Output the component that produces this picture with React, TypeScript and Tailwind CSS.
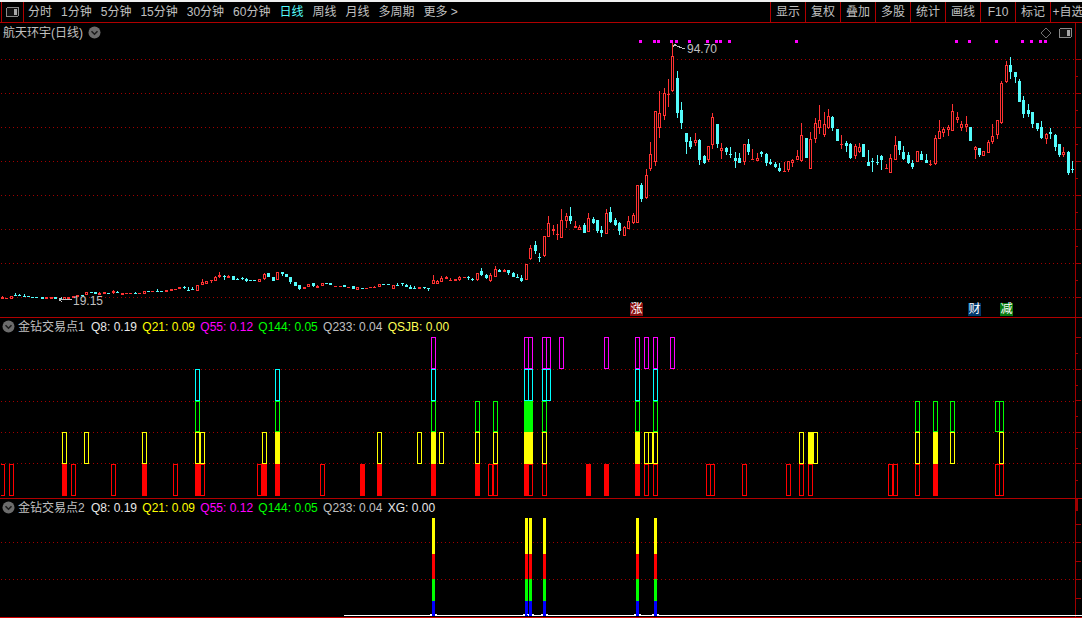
type Row = [number, number, number, "r" | "c", number?, number?];

// candle rows are read off zoomed crops: [x, bodyTop, bodyBottom, colour, wickTop, wickBottom]
const scan = (ox: number, oy: number, sx: number, rows: Row[]) =>
  rows.map(([z, t, b, k, wt, wb]) => ({
    x: Math.floor(ox + z / sx),
    top: Math.round(oy + t / 3),
    bottom: Math.round(oy + b / 3),
    wickTop: Math.round(oy + (wt ?? t) / 3),
    wickBottom: Math.round(oy + (wb ?? b) / 3),
    up: k === "r",
  }));

const candles = [
  ...scan(0, 268, 3, [
    [6, 88, 93, "r", 84], [18, 91, 93, "r"], [33, 85, 92, "r"], [45, 82, 84, "c", 75], [57, 81, 84, "c", 78],
    [72, 84, 85, "c", 78, 87], [84, 84, 86, "c"], [96, 87, 88, "c"], [110, 88, 89, "c", 88, 91], [126, 88, 92, "c"],
    [140, 88, 92, "r"], [154, 88, 92, "r"], [166, 88, 93, "c"], [180, 91, 93, "c"], [193, 88, 95, "r"],
    [205, 88, 92, "r"], [220, 85, 90, "r"], [232, 81, 86, "r"], [246, 81, 83, "c"], [259, 73, 80, "r"],
    [274, 73, 75, "c"], [286, 73, 78, "c", 71], [298, 75, 80, "r", 72], [313, 73, 77, "r"], [325, 75, 77, "c"],
    [340, 70, 76, "r", 66, 78], [352, 72, 75, "c", 69], [367, 76, 80, "r"], [378, 76, 78, "r"], [391, 76, 78, "r"],
    [405, 74, 77, "c", 72], [418, 76, 78, "r"], [433, 70, 77, "r"], [445, 70, 72, "c"], [458, 70, 72, "r"],
    [471, 69, 70, "c", 64], [484, 68, 71, "c"], [499, 67, 71, "r"], [514, 64, 68, "r"], [526, 62, 66, "r"],
    [538, 58, 62, "r"], [552, 58, 60, "c", 54, 63], [564, 65, 66, "c", 58], [577, 64, 66, "c", 58], [592, 52, 68, "r"],
    [607, 42, 51, "r", 34, 52], [619, 39, 47, "r"], [634, 37, 40, "r", 37, 45], [646, 28, 38, "r", 24], [658, 22, 28, "r", 13, 31],
    [673, 23, 27, "c", 20, 36], [685, 24, 29, "r", 21], [700, 24, 35, "c"], [712, 33, 34, "c", 30], [727, 29, 31, "c", 27, 36],
    [739, 32, 38, "c", 29, 42], [751, 37, 39, "c"], [763, 37, 40, "c"], [778, 34, 41, "r"], [793, 18, 33, "r", 15, 36],
    [805, 16, 28, "c"], [820, 27, 38, "c"], [832, 13, 37, "r"], [847, 13, 18, "c", 13, 24], [859, 19, 28, "c"],
    [871, 27, 41, "c", 27, 47], [886, 43, 54, "c"], [898, 51, 63, "c", 51, 65], [913, 57, 62, "r"], [925, 48, 56, "r"],
    [940, 46, 53, "c", 46, 57], [952, 54, 59, "r", 51], [967, 46, 55, "r"], [979, 46, 49, "c"], [990, 46, 50, "c"],
  ]),
  ...scan(0, 260, 2.904, [
    [975, 78, 82, "r"], [988, 78, 82, "r"],
    [1000, 74, 82, "c"], [1013, 80, 84, "r"], [1026, 78, 88, "c"], [1039, 82, 90, "r"], [1052, 83, 85, "c"],
    [1065, 84, 85, "r"], [1075, 82, 84, "r"], [1088, 81, 84, "r", 78], [1102, 72, 82, "r"], [1115, 72, 75, "c"],
    [1128, 73, 75, "c"], [1142, 76, 87, "r"], [1154, 74, 77, "c", 70],
  ]),
  ...scan(400, 190, 3, [
    [7, 280, 282, "c", 280, 288], [19, 285, 290, "c", 282], [31, 291, 297, "c", 285], [43, 295, 297, "c", 288], [58, 291, 297, "r"],
    [73, 292, 294, "c", 292, 297], [85, 294, 296, "c", 294, 303], [100, 270, 282, "r", 255], [112, 273, 282, "r", 270], [124, 264, 276, "r", 258],
    [139, 261, 267, "r", 258, 268], [150, 270, 273, "r", 265], [165, 268, 273, "r"], [178, 261, 270, "r", 258, 273], [192, 262, 264, "r"],
    [205, 261, 264, "c", 258, 270], [218, 267, 270, "c", 264, 273], [232, 250, 270, "r", 250, 273], [244, 243, 255, "c", 234, 258], [259, 256, 264, "c", 252, 267],
    [271, 255, 273, "r", 249, 276], [286, 238, 261, "r", 228], [297, 241, 246, "c", 237], [313, 240, 246, "r", 237], [325, 240, 249, "c", 240, 255],
    [340, 249, 261, "c", 246], [352, 261, 264, "c", 252], [364, 264, 273, "c", 255, 276], [379, 222, 270, "r"], [391, 175, 207, "r", 165, 210],
    [406, 165, 183, "c", 153, 192], [418, 201, 204, "c", 189, 216], [433, 138, 198, "r", 138, 201], [445, 99, 141, "r", 78], [460, 118, 123, "r", 105, 135],
    [472, 132, 134, "r", 102, 150], [484, 90, 144, "r", 57], [499, 78, 93, "r", 69, 114], [511, 78, 93, "c", 51, 102], [526, 108, 114, "r", 93],
    [538, 111, 120, "r", 105], [553, 105, 129, "c", 99], [565, 84, 126, "r", 69], [580, 87, 99, "c", 81, 102], [592, 90, 123, "c", 90, 129],
    [604, 120, 129, "c", 108, 141], [619, 69, 132, "r", 57], [631, 66, 96, "c", 51, 99], [646, 90, 105, "c", 84, 108], [658, 99, 123, "c", 96, 135],
    [673, 111, 138, "r", 108], [685, 93, 117, "r", 78], [700, 75, 99, "r", 69, 102],
  ]),
  ...scan(520, 40, 3, [
    [352, 436, 548, "r"], [364, 435, 477, "c", 429, 486], [379, 406, 474, "r", 388, 477], [391, 343, 387, "r", 306, 393], [406, 214, 365, "r", 214, 378],
    [418, 220, 263, "r", 153, 294], [433, 160, 227, "r", 144, 240], [445, 162, 165, "r", 117, 201], [457, 48, 153, "r", 10, 156], [472, 114, 219, "c", 93, 234],
    [484, 210, 249, "c", 186, 267], [499, 279, 306, "c", 279, 342], [511, 303, 321, "c", 291, 327], [526, 300, 309, "r", 279, 318], [538, 300, 360, "c", 297, 375],
    [553, 348, 370, "c", 345, 372], [565, 319, 360, "r", 319, 366], [577, 232, 314, "r", 219, 327], [592, 252, 312, "c", 252, 324], [604, 324, 333, "r", 309, 357],
    [619, 324, 336, "c", 321, 345], [631, 342, 345, "c", 321, 354], [646, 354, 363, "c", 336, 384], [658, 354, 369, "c", 339], [673, 313, 366, "r", 313, 375],
    [685, 312, 336, "c", 297, 345], [697, 356, 358, "r", 327, 360], [712, 354, 362, "r", 339], [724, 336, 342, "c", 333, 351], [739, 342, 369, "c", 339, 378],
    [751, 366, 372, "c", 358, 375], [766, 372, 381, "c", 366, 384], [778, 384, 393, "c", 369, 396], [793, 392, 395, "r", 366, 396], [805, 364, 390, "r", 364, 396],
    [817, 360, 369, "r", 357, 381], [832, 348, 360, "r", 331],
  ]),
  ...scan(800, 40, 3, [
    [4, 286, 362, "r", 249, 365], [19, 294, 354, "c"], [31, 298, 386, "r", 276], [46, 250, 296, "r", 234, 309], [58, 240, 263, "r", 195, 282],
    [73, 253, 285, "r", 216, 291], [85, 229, 263, "r", 207, 267], [97, 231, 264, "c", 228, 273], [112, 267, 303, "c"], [124, 311, 314, "r", 285, 327],
    [139, 309, 318, "c", 303, 336], [151, 312, 354, "c", 309, 357], [166, 318, 347, "r", 312, 357], [178, 321, 336, "r", 309, 339], [190, 312, 351, "c"],
    [205, 366, 378, "c", 330], [217, 363, 366, "c", 354, 396], [232, 366, 369, "c", 345, 375], [244, 348, 360, "c", 345, 390], [259, 384, 387, "r", 372],
    [271, 354, 398, "r", 342], [286, 316, 360, "r", 288], [298, 303, 330, "c", 303, 345], [310, 336, 357, "c", 318, 360], [325, 345, 369, "c", 336, 372],
    [337, 369, 381, "c", 360, 387], [352, 334, 365, "r"], [364, 342, 360, "c", 333], [379, 360, 369, "c", 342], [391, 372, 375, "r", 360, 378],
    [406, 294, 372, "r", 285, 375], [418, 274, 296, "r", 240], [430, 267, 279, "r", 261, 291], [445, 261, 270, "r", 255, 288], [457, 213, 272, "r", 192],
    [472, 232, 240, "r", 216, 249], [484, 252, 264, "r", 243, 273], [499, 252, 262, "r", 228, 276], [511, 261, 303, "c"], [526, 321, 329, "r", 318, 357],
    [538, 324, 346, "c", 324, 351], [550, 334, 347, "r"], [565, 306, 338, "r", 300], [577, 288, 305, "r", 252, 312], [592, 240, 285, "r", 240, 297],
    [604, 129, 249, "r", 123, 252], [619, 75, 126, "r", 63, 129], [631, 75, 96, "c", 51, 117], [646, 96, 111, "c", 96, 129], [658, 123, 186, "c", 117],
    [670, 180, 222, "c", 168, 234], [685, 210, 222, "c", 192, 231], [697, 216, 252, "c", 216, 264], [712, 249, 267, "c", 249, 273], [724, 261, 294, "c", 243, 297],
    [739, 282, 296, "r", 279, 312], [751, 276, 282, "c", 264, 297], [766, 285, 321, "c", 282, 333], [778, 312, 345, "c", 312, 351], [790, 336, 345, "r", 321, 351],
    [805, 336, 399, "c", 333, 405], [817, 387, 390, "c", 363, 399],
  ]),
];

const signalDots = [639, 653, 657, 670, 675, 688, 706, 715, 719, 728, 795, 955, 968, 995, 1021, 1030, 1039, 1044];

// 0 = nothing, 1 = outline, 2 = solid
const signalBars: [number, number, number, number, number, number][] = [
  [0, 1, 0, 0, 0, 0], [9, 1, 0, 0, 0, 0], [62, 2, 1, 0, 0, 0], [71, 1, 0, 0, 0, 0], [84, 0, 1, 0, 0, 0],
  [111, 1, 0, 0, 0, 0], [142, 2, 1, 0, 0, 0], [173, 1, 0, 0, 0, 0], [195, 2, 1, 1, 1, 0], [200, 1, 1, 0, 0, 0],
  [257, 1, 0, 0, 0, 0], [262, 2, 1, 0, 0, 0], [275, 2, 2, 1, 1, 0], [320, 1, 0, 0, 0, 0], [360, 2, 0, 0, 0, 0],
  [377, 2, 1, 0, 0, 0], [417, 0, 1, 0, 0, 0], [431, 2, 2, 1, 1, 1], [439, 0, 1, 0, 0, 0], [475, 2, 1, 1, 0, 0],
  [488, 1, 0, 0, 0, 0], [493, 1, 1, 1, 0, 0], [524, 2, 2, 2, 1, 1], [528, 1, 2, 2, 1, 1], [542, 1, 1, 1, 1, 1],
  [546, 0, 0, 0, 1, 1], [559, 0, 0, 0, 0, 1], [586, 2, 0, 0, 0, 0], [604, 2, 0, 0, 0, 1], [635, 2, 2, 1, 1, 1],
  [644, 1, 1, 0, 0, 1], [648, 0, 1, 0, 0, 0], [653, 1, 1, 1, 1, 1], [670, 0, 0, 0, 0, 1], [706, 1, 0, 0, 0, 0],
  [710, 1, 0, 0, 0, 0], [742, 1, 0, 0, 0, 0], [786, 1, 0, 0, 0, 0], [799, 1, 1, 0, 0, 0], [808, 1, 2, 0, 0, 0],
  [813, 0, 1, 0, 0, 0], [888, 1, 0, 0, 0, 0], [893, 1, 0, 0, 0, 0], [915, 1, 1, 1, 0, 0], [933, 2, 2, 1, 0, 0],
  [950, 0, 1, 1, 0, 0], [995, 1, 0, 1, 0, 0], [999, 1, 1, 1, 0, 0],
];

const bands = [
  { top: 464, bottom: 496, color: "#ff0000" },
  { top: 432, bottom: 464, color: "#ffff00" },
  { top: 401, bottom: 432, color: "#00ff00" },
  { top: 369, bottom: 401, color: "#00ffff" },
  { top: 337, bottom: 369, color: "#ff00ff" },
];

const xgBars = [432, 525, 529, 543, 636, 654];
const xgParts = [
  { y: 518, h: 36, color: "#ffff00" },
  { y: 554, h: 25, color: "#ff0000" },
  { y: 579, h: 22, color: "#00ff00" },
  { y: 601, h: 15, color: "#0000ff" },
];

const periods = ["分时", "1分钟", "5分钟", "15分钟", "30分钟", "60分钟", "日线", "周线", "月线", "多周期", "更多 >"];
const tools = ["显示", "复权", "叠加", "多股", "统计", "画线", "F10", "标记", "+自选"];

const GRID = "#a00000";

function Grid({ ys }: { ys: number[] }) {
  return (
    <>
      {ys.map((y) => (
        <line key={y} x1={1} x2={1075} y1={y + 0.5} y2={y + 0.5} stroke={GRID} strokeDasharray="1 3" />
      ))}
    </>
  );
}

function Axis({ top, bottom, long, short }: { top: number; bottom: number; long: number[]; short: number[] }) {
  return (
    <>
      <rect x={1075} y={top} width={1} height={bottom - top} fill={GRID} />
      {long.map((y) => (
        <rect key={y} x={1075} y={y} width={6} height={1} fill={GRID} />
      ))}
      {short.map((y) => (
        <rect key={y} x={1075} y={y} width={3} height={1} fill={GRID} />
      ))}
    </>
  );
}

function PanelToggle() {
  return (
    <svg width="13" height="10" viewBox="0 0 13 10" shapeRendering="crispEdges">
      <rect x="0.5" y="0.5" width="12" height="9" rx="1.5" fill="#111" stroke="#8a8a8a" />
      <rect x="8" y="2" width="3" height="6" fill="#a8a8a8" />
    </svg>
  );
}

function Collapse() {
  return (
    <svg width="13" height="13" viewBox="0 0 13 13" className="shrink-0">
      <circle cx="6.5" cy="6.5" r="6" fill="#6c6c6c" />
      <path d="M3.5 5.2 6.5 8.2 9.5 5.2" fill="none" stroke="#1c1c1c" strokeWidth="1.6" />
    </svg>
  );
}

function Legend({ title, items }: { title: string; items: [string, string][] }) {
  return (
    <div className="relative z-10 flex h-[17px] items-center pl-[2px] text-[12px] leading-none">
      <Collapse />
      <span className="ml-[3px] w-[73px] shrink-0 text-[#c0c0c0]">{title}</span>
      <div className="flex gap-[5.3px] whitespace-pre">
        {items.map(([text, color]) => (
          <span key={text} style={{ color }}>
            {text}
          </span>
        ))}
      </div>
    </div>
  );
}

const baseLegend: [string, string][] = [
  ["Q8: 0.19", "#e8e8e8"],
  ["Q21: 0.09", "#ffff00"],
  ["Q55: 0.12", "#ff00ff"],
  ["Q144: 0.05", "#00ff00"],
  ["Q233: 0.04", "#c0c0c0"],
];

export default function App() {
  return (
    <div
      className="flex h-[618px] w-[1082px] flex-col overflow-hidden bg-black text-[12px] text-[#c0c0c0]"
      style={{ fontFamily: '"Liberation Sans", "Noto Sans CJK SC", sans-serif' }}
    >
      <div className="h-[2px] shrink-0 bg-[#f0f0f0]" />

      {/* toolbar */}
      <div className="flex h-[21px] shrink-0 border-b border-[#b00000]">
        <div className="ml-[1px] flex w-[23px] shrink-0 items-center justify-center border-x border-[#b00000]">
          <PanelToggle />
        </div>
        <div className="flex flex-1 items-center gap-[9px] whitespace-pre pl-[4px]">
          {periods.map((p) => (
            <span key={p} className={p === "日线" ? "text-[#54fcfc]" : ""}>
              {p}
            </span>
          ))}
        </div>
        <div className="flex w-[312px] shrink-0 overflow-hidden">
          {tools.map((t) => (
            <div
              key={t}
              className="flex w-[35px] shrink-0 items-center justify-center whitespace-nowrap border-l border-[#b00000]"
            >
              {t}
            </div>
          ))}
        </div>
      </div>

      {/* price panel */}
      <div className="relative h-[295px] shrink-0 border-b border-[#b00000]">
        <div className="flex h-[19px] items-center gap-[5px] pl-[3px]">
          <span>航天环宇(日线)</span>
          <Collapse />
        </div>
        <div className="absolute right-[10px] top-[4px] flex items-center gap-[7px]">
          <svg width="12" height="12" viewBox="0 0 12 12">
            <path d="M6 1 11 6 6 11 1 6Z" fill="none" stroke="#6e6e6e" />
          </svg>
          <PanelToggle />
        </div>
        <svg className="absolute left-0 top-0" width="1082" height="294" viewBox="0 23 1082 294" shapeRendering="crispEdges">
          <Grid ys={[59, 93, 127, 161, 195, 229, 263, 297]} />
          <Axis
            top={23}
            bottom={317}
            long={[59, 93, 127, 161, 195, 229, 263, 297]}
            short={[76, 110, 144, 178, 212, 246, 280]}
          />
          {signalDots.map((x) => (
            <rect key={x} x={x} y={40} width={3} height={3} fill="#ff00ff" />
          ))}
          {candles.map((c, i) => {
            const color = c.up ? "#ff3232" : "#54fcfc";
            const h = c.bottom - c.top;
            return (
              <g key={i}>
                <rect x={c.x} y={c.wickTop} width={1} height={Math.max(c.wickBottom - c.wickTop, 1)} fill={color} />
                {c.up && h > 2 ? (
                  <rect x={c.x - 0.5} y={c.top + 0.5} width={2} height={h - 1} fill="#000" stroke={color} />
                ) : (
                  <rect x={c.x - 1} y={c.top} width={3} height={Math.max(h, 1)} fill={color} />
                )}
              </g>
            );
          })}
          {/* high / low pointers */}
          <path d="M673.5 44.5H676M673.5 44.5V47M674 45 685 49" fill="none" stroke="#c0c0c0" />
          <path d="M59 299.5H72M59 299.5 62 297M59 299.5 62 302" fill="none" stroke="#c0c0c0" />
        </svg>
        <span className="absolute left-[687px] top-[20px] leading-[13px]">94.70</span>
        <span className="absolute left-[73px] top-[272px] leading-[13px]">19.15</span>
        <span className="absolute left-[630px] top-[280px] h-[13px] w-[13px] bg-[#8c1010] text-center leading-[13px] text-white">
          涨
        </span>
        <span className="absolute left-[968px] top-[280px] h-[13px] w-[13px] bg-[#00386c] text-center leading-[13px] text-white">
          财
        </span>
        <span className="absolute left-[1000px] top-[280px] h-[13px] w-[13px] bg-[#087a10] text-center leading-[13px] text-white">
          减
        </span>
      </div>

      {/* 金钻交易点1 */}
      <div className="relative h-[181px] shrink-0 border-b border-[#b00000]">
        <Legend title="金钻交易点1" items={[...baseLegend, ["QSJB: 0.00", "#ffff54"]]} />
        <svg className="absolute left-0 top-0" width="1082" height="180" viewBox="0 318 1082 180" shapeRendering="crispEdges">
          <Grid ys={[369, 401, 432, 463]} />
          <Axis top={318} bottom={498} long={[337, 369, 400, 432, 463]} short={[353, 385, 416, 448, 480]} />
          {signalBars.map(([x, ...levels]) =>
            levels.map((level, i) => {
              const band = bands[i];
              if (level === 0) return null;
              return level === 2 ? (
                <rect key={`${x}-${i}`} x={x} y={band.top} width={5} height={band.bottom - band.top} fill={band.color} />
              ) : (
                <rect
                  key={`${x}-${i}`}
                  x={x + 0.5}
                  y={band.top + 0.5}
                  width={4}
                  height={band.bottom - band.top - 1}
                  fill="none"
                  stroke={band.color}
                />
              );
            }),
          )}
          {/* the first bar is cut off by the left edge of the chart */}
          <rect x={0} y={464} width={1} height={32} fill="#000" />
        </svg>
      </div>

      {/* 金钻交易点2 */}
      <div className="relative h-[119px] shrink-0 border-b border-[#d00000]">
        <Legend title="金钻交易点2" items={[...baseLegend, ["XG: 0.00", "#e8e8e8"]]} />
        <svg className="absolute left-0 top-0" width="1082" height="118" viewBox="0 499 1082 118" shapeRendering="crispEdges">
          <Grid ys={[542, 579]} />
          <Axis top={499} bottom={617} long={[524, 542, 561, 579, 598]} short={[]} />
          <rect x={1075} y={499} width={3} height={12} fill={GRID} />
          <rect x={344} y={615} width={738} height={1} fill="#ffffff" />
          {xgBars.map((x) => (
            <g key={x}>
              <rect x={x - 2} y={614} width={7} height={1} fill="#ffffff" />
              {xgParts.map((p) => (
                <rect key={p.y} x={x} y={p.y} width={3} height={p.h} fill={p.color} />
              ))}
            </g>
          ))}
        </svg>
      </div>
    </div>
  );
}
